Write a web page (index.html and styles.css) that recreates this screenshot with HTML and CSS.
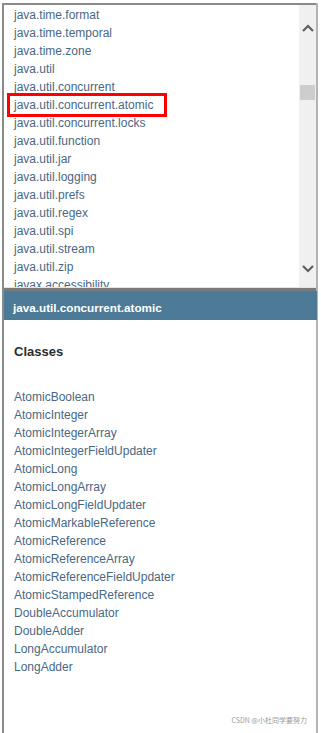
FILE: index.html
```html
<!DOCTYPE html>
<html lang="en">
<head>
    <meta charset="UTF-8">
    <title>java.util.concurrent.atomic</title>
    <link rel="stylesheet" href="styles.css">
</head>
<body>
    <div class="frame">
        <div class="packages">
            <ul class="package-list">
                <li><a href="#">java.time.format</a></li>
                <li><a href="#">java.time.temporal</a></li>
                <li><a href="#">java.time.zone</a></li>
                <li><a href="#">java.util</a></li>
                <li><a href="#">java.util.concurrent</a></li>
                <li class="marked"><a href="#">java.util.concurrent.atomic</a></li>
                <li><a href="#">java.util.concurrent.locks</a></li>
                <li><a href="#">java.util.function</a></li>
                <li><a href="#">java.util.jar</a></li>
                <li><a href="#">java.util.logging</a></li>
                <li><a href="#">java.util.prefs</a></li>
                <li><a href="#">java.util.regex</a></li>
                <li><a href="#">java.util.spi</a></li>
                <li><a href="#">java.util.stream</a></li>
                <li><a href="#">java.util.zip</a></li>
                <li><a href="#">javax.accessibility</a></li>
            </ul>
            <div class="scrollbar">
                <svg class="arrow" width="12" height="8" viewBox="0 0 12 8">
                    <path d="M1 7 L6 2 L11 7" fill="none" stroke="#606060" stroke-width="2.2"/>
                </svg>
                <div class="track">
                    <div class="thumb"></div>
                </div>
                <svg class="arrow" width="12" height="8" viewBox="0 0 12 8">
                    <path d="M1 1 L6 6 L11 1" fill="none" stroke="#606060" stroke-width="2.2"/>
                </svg>
            </div>
        </div>

        <div class="classes">
            <h1 class="pkg-title">java.util.concurrent.atomic</h1>
            <h2>Classes</h2>
            <ul class="class-list">
                <li><a href="#">AtomicBoolean</a></li>
                <li><a href="#">AtomicInteger</a></li>
                <li><a href="#">AtomicIntegerArray</a></li>
                <li><a href="#">AtomicIntegerFieldUpdater</a></li>
                <li><a href="#">AtomicLong</a></li>
                <li><a href="#">AtomicLongArray</a></li>
                <li><a href="#">AtomicLongFieldUpdater</a></li>
                <li><a href="#">AtomicMarkableReference</a></li>
                <li><a href="#">AtomicReference</a></li>
                <li><a href="#">AtomicReferenceArray</a></li>
                <li><a href="#">AtomicReferenceFieldUpdater</a></li>
                <li><a href="#">AtomicStampedReference</a></li>
                <li><a href="#">DoubleAccumulator</a></li>
                <li><a href="#">DoubleAdder</a></li>
                <li><a href="#">LongAccumulator</a></li>
                <li><a href="#">LongAdder</a></li>
            </ul>
            <p class="watermark">CSDN @小杜同学要努力</p>
        </div>
    </div>
</body>
</html>
```

FILE: styles.css
```css
* {
    margin: 0;
    padding: 0;
    box-sizing: border-box;
}

body {
    font-family: "Liberation Sans", Arial, sans-serif;
    background: #fff;
    width: 321px;
    height: 733px;
    overflow: hidden;
}

ul {
    list-style: none;
}

a {
    color: #4a6782;
    text-decoration: none;
}

.frame {
    margin-left: 2px;
    margin-top: 3px;
    width: 316px;
    border-left: 2px solid #8a8a8a;
    border-right: 2px solid #b4b4b4;
}

/* top frame: package list */
.packages {
    display: flex;
    height: 285px;
    border-top: 2px solid #8a8a8a;
    border-bottom: 1px solid #e3e3e3;
    overflow: hidden;
}

.package-list {
    flex: 1;
    padding: 1px 0 0 10px;
    font-size: 12px;
    line-height: 18px;
    background: #fff;
}

.package-list li {
    white-space: nowrap;
}

/* red marker round the selected package */
.marked {
    display: inline-block;
    margin-left: -4px;
    padding: 0 11px 0 4px;
    line-height: 18px;
    outline: 3px solid #f00;
}

.scrollbar {
    width: 17px;
    background: #f0f0f0;
    display: flex;
    flex-direction: column;
    align-items: center;
    padding: 19px 0 14px;
}

.track {
    flex: 1;
    width: 100%;
    padding-top: 53px;
}

.thumb {
    margin: 0 auto;
    width: 15px;
    height: 15px;
    background: #cdcdcd;
}

/* bottom frame: classes */
.classes {
    position: relative;
    border-top: 3px solid #7a7a7a;
    height: 445px;
}

.pkg-title {
    background: #4d7a97;
    color: #fff;
    font-size: 11.7px;
    font-weight: bold;
    height: 29px;
    padding: 4px 0 0 9px;
    line-height: 26px;
    margin-right: -1px;
}

h2 {
    font-size: 13px;
    font-weight: bold;
    color: #2c2c2c;
    padding: 24px 0 0 10px;
    line-height: 16px;
}

.class-list {
    padding: 28px 0 0 10px;
    font-size: 12px;
    line-height: 18px;
}

.watermark {
    position: absolute;
    right: 9px;
    bottom: 8px;
    font-family: "Noto Sans CJK SC", sans-serif;
    font-size: 7px;
    color: #9a9a9a;
}
```
